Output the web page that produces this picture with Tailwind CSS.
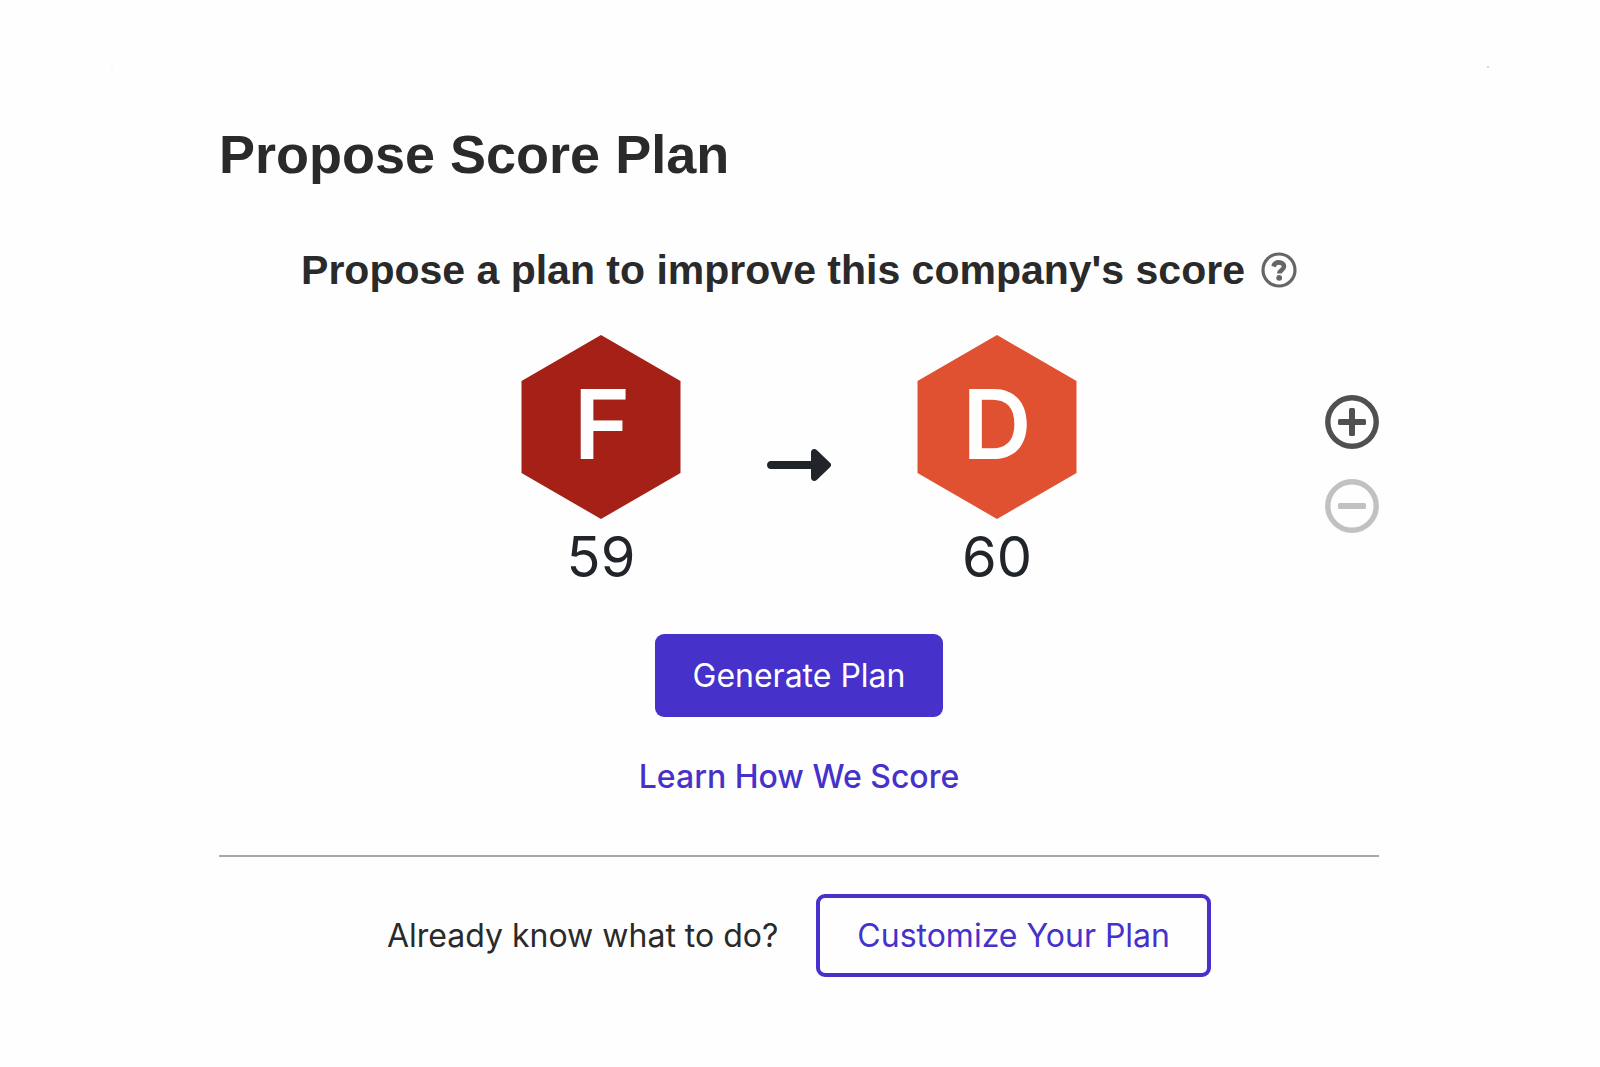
<!DOCTYPE html>
<html lang="en">
<head>
<meta charset="utf-8">
<meta name="viewport" content="width=device-width, initial-scale=1">
<title>Propose Score Plan</title>
<script src="https://cdn.jsdelivr.net/npm/@tailwindcss/browser@4"></script>
</head>
<body class="min-h-screen bg-[#fefefe] font-[Inter,sans-serif] text-[#212529]">
<main class="relative mx-auto max-w-[1378px] pt-[122px] pr-[110px] pb-[88px] pl-[108px]">
  <!-- card corner hairlines -->
  <span class="absolute top-[66px] left-0 size-0.5 bg-gray-100"></span>
  <span class="absolute top-[66px] right-0 size-0.5 bg-gray-300"></span>

  <h1 class="font-['Liberation_Sans',sans-serif] text-[54px] leading-[64px] font-bold text-[#2a2a2a]">Propose Score Plan</h1>

  <div class="mt-[60px] flex items-center justify-center gap-4">
    <h2 class="font-['Liberation_Sans',sans-serif] text-[41px] leading-[48px] font-bold text-[#2a2a2a]">Propose a plan to improve this company's score</h2>
    <button type="button" aria-label="Help" class="size-9 shrink-0 text-[#666]">
      <svg viewBox="0 0 36 36" class="size-9" fill="none" stroke="currentColor">
        <circle cx="18" cy="18" r="16" stroke-width="3.200"/>
        <path d="M12.400 14.400C13.400 11.600 15 10.400 17.800 10.400C20.900 10.400 23 12.200 23 14.600C23 18.200 18.300 17.900 18.300 21.600" stroke-width="4.600"/>
        <circle cx="18.200" cy="25.800" r="2.900" fill="currentColor" stroke="none"/>
      </svg>
    </button>
  </div>

  <div class="mt-[41px] grid grid-cols-[1fr_auto_1fr] items-start">
    <div></div>
    <div class="flex items-start gap-[85px]">
      <figure class="flex w-40 flex-col items-center">
        <svg viewBox="0 0 160 184" class="h-[184px] w-40" role="img">
          <polygon points="80,0 159.5,46 159.5,138 80,184 0.5,138 0.5,46" fill="#a52016"/>
          <text x="81" y="124" text-anchor="middle" fill="#fff" class="font-[Inter,sans-serif] text-[96px] font-semibold">F</text>
        </svg>
        <figcaption class="text-[56px] leading-[76px]">59</figcaption>
      </figure>
      <svg viewBox="0 0 66 34" class="mt-[113px] h-[34px] w-[66px] fill-[#212529]" aria-hidden="true">
        <path d="M5 13H45V4.500C45 1.200 48.500 0 51 2.300L64 14.800C65.500 16.200 65.500 17.800 64 19.200L51 31.700C48.500 34 45 32.800 45 29.500V21H5C-.3 21-.3 13 5 13Z"/>
      </svg>
      <figure class="flex w-40 flex-col items-center">
        <svg viewBox="0 0 160 184" class="h-[184px] w-40" role="img">
          <polygon points="80,0 159.5,46 159.5,138 80,184 0.5,138 0.5,46" fill="#df5130"/>
          <text x="80" y="124" text-anchor="middle" fill="#fff" class="font-[Inter,sans-serif] text-[96px] font-semibold">D</text>
        </svg>
        <figcaption class="text-[56px] leading-[76px]">60</figcaption>
      </figure>
    </div>
    <div class="mt-[60px] flex flex-col items-end gap-[30px]">
      <button type="button" aria-label="Increase score" class="size-[54px] text-[#505050]">
        <svg viewBox="0 0 54 54" class="size-[54px]" fill="none" stroke="currentColor">
          <circle cx="27" cy="27" r="24.200" stroke-width="5.400"/>
          <rect x="13" y="24" width="28" height="6" rx="1.500" fill="currentColor" stroke="none"/>
          <rect x="24" y="13" width="6" height="28" rx="1.500" fill="currentColor" stroke="none"/>
        </svg>
      </button>
      <button type="button" aria-label="Decrease score" disabled class="size-[54px] text-[#c1c1c1]">
        <svg viewBox="0 0 54 54" class="size-[54px]" fill="none" stroke="currentColor">
          <circle cx="27" cy="27" r="24.200" stroke-width="5.400"/>
          <rect x="13" y="24" width="28" height="6" rx="1.500" fill="currentColor" stroke="none"/>
        </svg>
      </button>
    </div>
  </div>

  <div class="mt-[39px] flex flex-col items-center">
    <button type="button" class="h-[83px] rounded-[9px] bg-[#4631cb] px-[38px] text-[32px] leading-10 text-white">Generate Plan</button>
    <a href="#" class="mt-10 text-[32px] leading-10 font-medium text-[#4631cb]">Learn How We Score</a>
  </div>

  <hr class="mt-[58px] border-t-2 border-[#a5a8a6]">

  <div class="mt-[37px] flex items-center justify-center gap-[38px]">
    <p class="text-[32px] leading-10 text-[#2a2a2a]">Already know what to do?</p>
    <button type="button" class="h-[83px] rounded-[9px] border-4 border-[#4631cb] px-[37px] text-[32px] leading-10 text-[#4631cb]">Customize Your Plan</button>
  </div>
</main>
</body>
</html>
